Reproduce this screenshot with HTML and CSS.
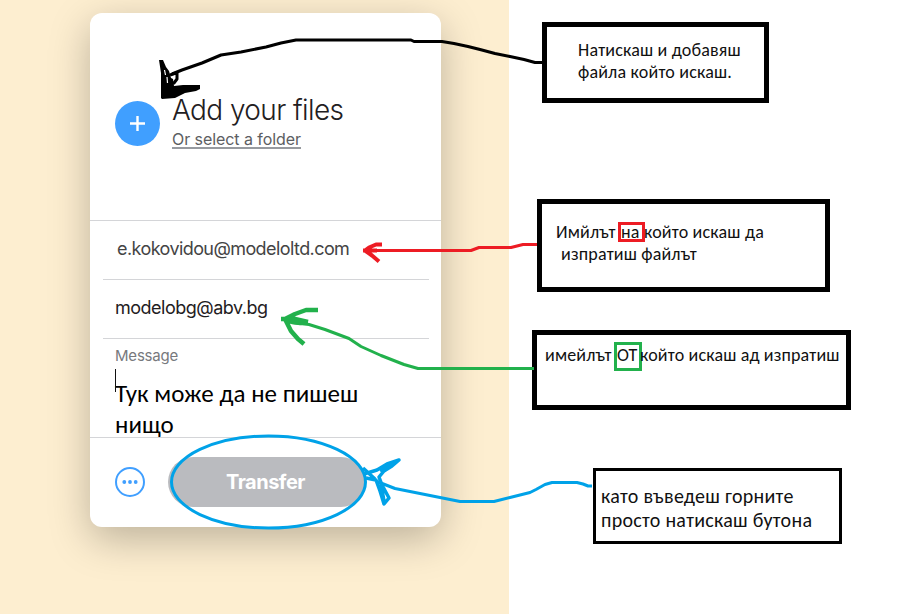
FILE: index.html
```html
<!DOCTYPE html>
<html lang="bg">
<head>
<meta charset="utf-8">
<title>Transfer</title>
<link rel="stylesheet" href="styles.css">
</head>
<body>
<main class="stage">
  <section class="backdrop">
    <div class="card">
      <div class="upload">
        <svg class="plus" width="45" height="45" viewBox="0 0 45 45"><circle cx="22.5" cy="22.5" r="22.5" fill="#409fff"/><path d="M22.5 15v15M15 22.5h15" stroke="#fff" stroke-width="2.4"/></svg>
        <div class="upload-text">
          <h1><span class="t-add">Add your files</span></h1>
          <a class="folder"><span class="t-folder">Or select a folder</span></a>
        </div>
      </div>
      <div class="field recipient"><span class="t-to">e.kokovidou@modeloltd.com</span></div>
      <div class="field sender"><span class="t-from">modelobg@abv.bg</span></div>
      <div class="message">
        <label class="t-label">Message</label>
        <i class="caret"></i>
        <p class="t-msg">Тук може да не пишеш<br>нищо</p>
      </div>
      <div class="actions">
        <svg width="30" height="30" viewBox="0 0 30 30"><circle cx="15" cy="15" r="14" fill="none" stroke="#409fff" stroke-width="2"/><g fill="#409fff"><circle cx="9.3" cy="15" r="1.9"/><circle cx="15" cy="15" r="1.9"/><circle cx="20.7" cy="15" r="1.9"/></g></svg>
        <button class="transfer"><span class="t-btn">Transfer</span></button>
      </div>
    </div>
  </section>
  <aside class="notes">
    <p class="note note-add"><span class="t-n1">Натискаш и добавяш</span><br><span class="t-n2">файла който искаш.</span></p>
    <p class="note note-to"><span class="t-n3">Имйлът <mark class="red">на</mark>който искаш да</span><br><span class="t-n4">изпратиш файлът</span></p>
    <p class="note note-from"><span class="t-n5">имейлът <mark class="green">ОТ</mark>който искаш ад изпратиш</span></p>
    <p class="note note-send"><span class="t-n6">като въведеш горните</span><br><span class="t-n7">просто натискаш бутона</span></p>
  </aside>
  <svg class="ink" width="913" height="614" viewBox="0 0 913 614" fill="none" stroke-width="3" stroke-linejoin="round">
    <g stroke="#000">
      <path d="M543 62.500h-8l-11-3-14-3-15-3-15-4-12-3-14-3-12-2h-28l-3-1.500H296l-15 3-15 4-25 5-20 3-19 8-20 7-10 4"/>
      <path d="M177 72v7l-3 4h-4M170 75l6-2"/>
      <path d="M159 60L163 60L166 67L169 71L171 78L173 79L174 86L183 85H200V89L196 91L185 93L175 98L162 99L161 98V73Z" fill="#000" stroke="none"/>
      <path d="M164.500 70l1 5M167 77l.5 6" stroke="#fff" stroke-width="1.200"/>
    </g>
    <g stroke="#ed1c24">
      <path d="M537 244.500h-14l-12 3h-32l-8 3H376"/>
      <path d="M363 250.500h14M382 244.500h-6l-7 3-4 3 7 5 7 6" stroke-width="4"/>
    </g>
    <g stroke="#22b14c">
      <path d="M534 368.500H418l-14-4-23-9-20-9-12-8-24-9-16-5-18-2"/>
      <path d="M281 319h14l13 3M318 310h-12l-11 4-10 5 6 12 7 8 6 5M287 321l13 2 8-1" stroke-width="4.500"/>
    </g>
    <g stroke="#00a2e8">
      <ellipse cx="268.500" cy="482" rx="97" ry="46"/>
      <path d="M592 486h-4l-5-2-6-1.500h-25l-7 2-9 5-6 3-20 5-16 4h-34l-15-3-15-3-20-4-15-3-18-7"/>
      <path d="M363 468L375 479M364 474L377 470L387 464L399 460L392 466L384 471L379 477L382 485L389 498L384 504L380 491L376 480L366 478M380 471L392 464M381 484L384 501" stroke-width="3.500"/>
    </g>
  </svg>
</main>
</body>
</html>
```
FILE: styles.css
```css
* { box-sizing: border-box; }
body { margin: 0; background: #fff; font-family: Inter, "Liberation Sans", sans-serif; color: #1f2022; }
h1, p { margin: 0; font-weight: 400; }
.stage { display: grid; grid-template-columns: 509px 1fr; height: 614px; position: relative; overflow: hidden; }
.backdrop { background: #fdeed0; padding: 13px 68px 87px 90px; overflow: hidden; }
.card { width: 351px; height: 514px; background: #fff; border-radius: 12px; box-shadow: 0 12px 40px rgba(0, 0, 0, .26); display: flex; flex-direction: column; }
.card span, .card p, .card label, .note { white-space: nowrap; }
.upload { height: 208px; border-bottom: 1px solid #d4d5d8; display: flex; align-items: flex-start; gap: 12px; padding: 80px 0 0 25px; }
.plus { margin-top: 8px; }
h1 { font-size: 28px; line-height: 35px; font-weight: 300; letter-spacing: -.6px; }
.folder { height: 21px; font-size: 16px; line-height: 22px; letter-spacing: -.07px; color: #5c5e62; border-bottom: 2px solid #979a9f; }
.upload-text > * { display: block; width: max-content; }
.field { height: 59px; margin: 0 12px 0 13px; border-bottom: 1px solid #d4d5d8; font-size: 18px; line-height: 55px; }
.recipient { padding-left: 14px; color: #444; letter-spacing: -.58px; }
.sender { padding-left: 12px; letter-spacing: -.5px; }
.message { height: 99px; border-bottom: 1px solid #d4d5d8; padding: 7px 0 0 25px; position: relative; }
.t-label { display: block; font-size: 15px; line-height: 20px; letter-spacing: -.2px; color: #77797d; }
.caret { position: absolute; left: 25px; top: 30px; width: 1px; height: 23px; background: #111; }
.t-msg { margin-top: 12px; font: 25px/31px Carlito, "Noto Sans", sans-serif; letter-spacing: .04px; color: #000; }
.actions { flex: 1; display: flex; align-items: center; gap: 23px; padding: 0 0 1px 25px; }
.transfer { width: 198px; height: 50px; border: 0; border-radius: 25px; background: #babbbf; color: #fff; font: 700 20px Inter, sans-serif; letter-spacing: -.5px; padding: 0 3px 0 0; }
.notes { font: 18px/22px Carlito, "Noto Sans", sans-serif; letter-spacing: .18px; color: #111; }
.note { border: 5px solid #000; }
.note-add { width: 227px; height: 81px; margin: 22px 0 0 33px; padding: 12px 0 0 31px; }
.note-to { width: 293px; height: 93px; margin: 96px 0 0 28px; padding: 17px 0 0 14px; }
.t-n4 { margin-left: 5px; }
.note-from { width: 319px; height: 80px; margin: 38px 0 0 23px; padding: 9px 0 0 8px; letter-spacing: .15px; }
.note-send { width: 249px; height: 76px; margin: 58px 0 0 84px; padding: 13px 0 0 5px; border-width: 3px; font-size: 20px; line-height: 24px; letter-spacing: .27px; }
mark { background: none; display: inline-block; outline: 3px solid; color: #111; }
.red { outline-color: #ed1c24; width: 21px; height: 14px; line-height: 14px; margin: 0 2px 0 1px; }
.green { outline-color: #22b14c; width: 22px; height: 23px; line-height: 20px; margin: 0 1px 0 1px; letter-spacing: 0; }
.ink { position: absolute; left: 0; top: 0; pointer-events: none; }
```
